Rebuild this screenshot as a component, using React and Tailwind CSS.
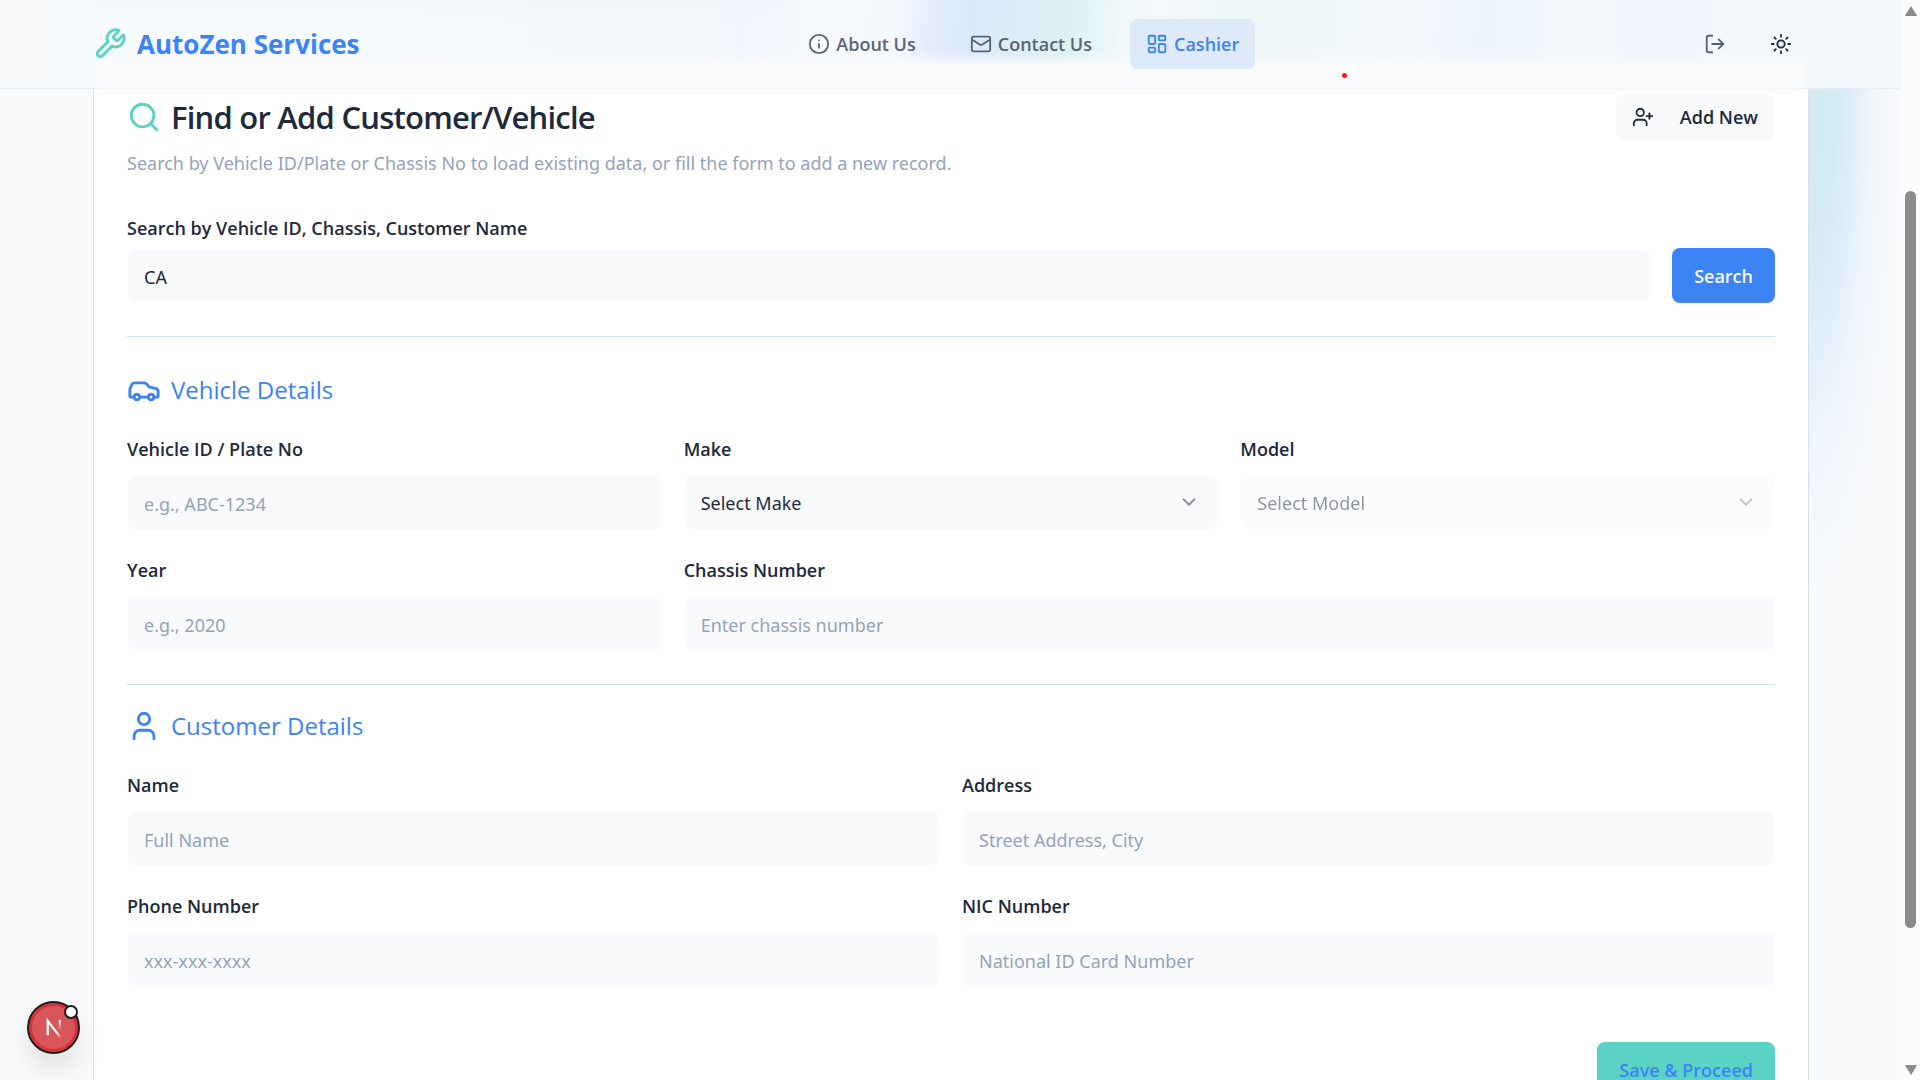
import { Search, Car, User, UserPlus, Info, Mail, LayoutDashboard, LogOut, Sun, ChevronDown } from "lucide-react";

const fieldBox =
  "h-[55px] w-full rounded-lg border border-white bg-[#f8fafc] bg-clip-padding px-4 pt-0.5 font-['Noto_Sans','Open_Sans',sans-serif] text-[18px] text-[#1e293b] placeholder:text-[#94a3b8]";

function Field({ id, label, placeholder, className = "" }) {
  return (
    <div className={`flex flex-col gap-[14px] ${className}`}>
      <label htmlFor={id} className="text-[18px] leading-6 font-semibold">{label}</label>
      <input id={id} type="text" placeholder={placeholder} className={fieldBox} />
    </div>
  );
}

function SelectField({ id, label, option, disabled = false }) {
  return (
    <div className="flex flex-col gap-[14px]">
      <label htmlFor={id} className="text-[18px] leading-6 font-semibold">{label}</label>
      <div className={`relative ${disabled ? "opacity-50" : ""}`}>
        <select id={id} disabled={disabled} className={`${fieldBox} appearance-none opacity-100`}>
          <option>{option}</option>
        </select>
        <ChevronDown size={22} className="pointer-events-none absolute top-4 right-[18px] text-[#1e293b] opacity-50" />
      </div>
    </div>
  );
}

function Wrench() {
  return (
    <svg viewBox="0 0 24 24" className="size-[34px] text-[#5bd3c4]" fill="none" stroke="currentColor" strokeWidth="2" strokeLinecap="round" strokeLinejoin="round" aria-hidden="true">
      <path d="M14.7 6.3a1 1 0 0 0 0 1.4l1.6 1.6a1 1 0 0 0 1.4 0l3.77-3.77a6 6 0 0 1-7.94 7.94l-6.91 6.91a2.12 2.12 0 0 1-3-3l6.91-6.91a6 6 0 0 1 7.94-7.94l-3.76 3.76z" />
    </svg>
  );
}

function Header() {
  return (
    <header className="absolute inset-x-0 top-0 z-10 h-[89px] border-b border-[#e5edf6] bg-[#fafbfd]">
      <div className="absolute inset-0 bg-[linear-gradient(93deg,#f8fafc_0%,#f7fafc_20%,#f3f8fc_32%,#f3f8fb_37%,#f1f5fd_39%,#f6fafd_43%,#f4f8fd_47%,#e3edfb_49%,#dde9fb_51%,#dbeff6_54%,#daf1f4_56%,#f0f8fb_59%,#f4f9fc_61%,#edf6f9_66%,#f3f8fc_74%,#edf3fd_78%,#f2f8fb_83%,#eff4fd_87%,#f2f8fb_92%,#f4f8fb_100%)]" />
      <div className="absolute top-0 left-[90px] h-3 w-[700px] bg-linear-to-b from-[#e9edf3] to-transparent opacity-50 blur-[5px]" />
      <div className="absolute inset-x-[100px] bottom-0 h-6 bg-[#fafbfd] shadow-[0_0_12px_4px_#fafbfd]" />
      <div className="relative mx-[93px] flex h-[88px] items-center justify-between">
        <a href="#home" className="flex items-center gap-[10px] text-[26px] font-bold text-[#3c83f6]">
          <Wrench />
          <span>AutoZen Services</span>
        </a>
        <nav className="flex items-center gap-[22px] text-[18px] font-semibold text-[#5b6472]">
          <a href="#about" className="flex h-[50px] items-center gap-[6px] px-4"><Info size={22} />About Us</a>
          <a href="#contact" className="flex h-[50px] items-center gap-[6px] px-4"><Mail size={22} />Contact Us</a>
          <a href="#cashier" className="flex h-[50px] items-center gap-[6px] rounded-lg bg-[#deeafa] px-4 text-[#3c83f6]"><LayoutDashboard size={22} />Cashier</a>
        </nav>
        <div className="flex items-center gap-3">
          <button type="button" aria-label="Log out" className="flex size-[54px] items-center justify-center text-[#5b6472]"><LogOut size={22} /></button>
          <button type="button" aria-label="Toggle theme" className="flex size-[54px] items-center justify-center text-[#1e293b]"><Sun size={22} /></button>
        </div>
      </div>
      <span className="absolute top-[73px] left-[1342px] size-[5px] rounded-full bg-[#ee1c1c]" />
    </header>
  );
}

function Scrollbar() {
  return (
    <div className="flex w-[19px] shrink-0 flex-col items-center bg-[#fcfcfc]" aria-hidden="true">
      <svg viewBox="0 0 14 12" className="mt-[5px] h-3 w-[14px]" fill="#8b8b8b"><path d="M7 1 13 10.5Q13 11 12 11H2Q1 11 1 10.5Z" /></svg>
      <div className="mt-[174px] h-[737px] w-[11px] rounded-full bg-[#8b8b8b]" />
      <div className="grow" />
      <svg viewBox="0 0 14 12" className="mb-1 h-3 w-[14px]" fill="#8b8b8b"><path d="M7 11 13 1.5Q13 1 12 1H2Q1 1 1 1.5Z" /></svg>
    </div>
  );
}

function DevBadge() {
  return (
    <button type="button" aria-label="Open developer tools" className="absolute bottom-[26px] left-[27px] z-20 flex size-[53px] items-center justify-center rounded-full border-2 border-[#1c1c1c] bg-[#d8565a] text-white shadow-[0_16px_32px_-4px_rgba(0,0,0,0.14)] ring-3 ring-[#d6323a] ring-inset">
      <svg viewBox="0 0 20 24" className="h-[22px] w-[18px]" fill="none" aria-hidden="true">
        <defs>
          <linearGradient id="diag" x1="2" y1="2" x2="18" y2="23" gradientUnits="userSpaceOnUse"><stop offset="0.7" stopColor="#fff" /><stop offset="1" stopColor="#fff" stopOpacity="0" /></linearGradient>
          <linearGradient id="stem" x1="0" y1="2" x2="0" y2="15" gradientUnits="userSpaceOnUse"><stop stopColor="#fff" /><stop offset="1" stopColor="#fff" stopOpacity="0" /></linearGradient>
        </defs>
        <path d="M3 20V4L17.500 23" stroke="url(#diag)" strokeWidth="2.500" />
        <path d="M16.500 3V15" stroke="url(#stem)" strokeWidth="2.500" />
      </svg>
      <span className="absolute top-0.5 right-0 size-[14px] rounded-full border-2 border-[#1c1c1c] bg-white" />
    </button>
  );
}

export default function App() {
  return (
    <div className="flex h-screen overflow-hidden bg-[#f8fafc] font-['Open_Sans','Noto_Sans',sans-serif] text-[#1e293b]">
      <div className="relative min-w-0 grow overflow-hidden">
        <div className="absolute top-0 right-0 h-[660px] w-[92px] bg-[radial-gradient(ellipse_92px_520px_at_0_80px,#d1ebf0_0%,#d3ebf3_28%,#e1effa_50%,#eff5fc_70%,#f8fafc_100%)]" />
        <Header />
        <main className="relative mr-[92px] ml-[93px] flex h-full flex-col border-x border-[#d5e0ec] bg-white px-[33px] pt-[93px]">
          <div className="flex items-center justify-between">
            <h1 className="flex items-center gap-[10px] text-[31px] leading-[48px] font-semibold tracking-tight"><Search size={34} className="text-[#5bd3c4]" />Find or Add Customer/Vehicle</h1>
            <button type="button" className="flex h-12 items-center gap-[26px] rounded-lg border border-white bg-[#f8fafc] bg-clip-padding px-4 text-[18px] font-semibold"><UserPlus size={22} />Add New</button>
          </div>
          <p className="mt-2 font-['Noto_Sans','Open_Sans',sans-serif] text-[18px] leading-7 text-[#94a3b8]">Search by Vehicle ID/Plate or Chassis No to load existing data, or fill the form to add a new record.</p>
          <form className="mt-[39px]">
            <div className="flex items-end gap-[22px]">
              <div className="flex grow flex-col gap-2">
                <label htmlFor="search" className="text-[18px] leading-6 font-semibold">Search by Vehicle ID, Chassis, Customer Name</label>
                <input id="search" type="text" defaultValue="CA" className={fieldBox} />
              </div>
              <button type="button" className="h-[55px] rounded-lg bg-[#3c83f6] px-[22px] pt-0.5 text-[18px] font-semibold text-[#f8fafc]">Search</button>
            </div>
            <hr className="mt-[33px] border-[#d0dff0]" />
            <h2 className="mt-[35px] flex items-center gap-[10px] text-[24px] leading-9 font-medium text-[#3c83f6]"><Car size={34} />Vehicle Details</h2>
            <div className="mt-[29px] grid grid-cols-3 gap-x-[22px] gap-y-7">
              <Field id="plate" label="Vehicle ID / Plate No" placeholder="e.g., ABC-1234" />
              <SelectField id="make" label="Make" option="Select Make" />
              <SelectField id="model" label="Model" option="Select Model" disabled />
              <Field id="year" label="Year" placeholder="e.g., 2020" />
              <Field id="chassis" label="Chassis Number" placeholder="Enter chassis number" className="col-span-2" />
            </div>
            <hr className="mt-[33px] border-[#d0dff0]" />
            <h2 className="mt-[23px] flex items-center gap-[10px] text-[24px] leading-9 font-medium text-[#3c83f6]"><User size={34} />Customer Details</h2>
            <div className="mt-[29px] grid grid-cols-2 gap-x-[22px] gap-y-7">
              <Field id="name" label="Name" placeholder="Full Name" />
              <Field id="address" label="Address" placeholder="Street Address, City" />
              <Field id="phone" label="Phone Number" placeholder="xxx-xxx-xxxx" />
              <Field id="nic" label="NIC Number" placeholder="National ID Card Number" />
            </div>
            <div className="mt-[55px] flex justify-end">
              <button type="submit" className="h-[55px] rounded-lg bg-[#5bd3c4] px-[22px] pt-0.5 text-[18px] font-semibold text-[#3c83f6]">Save &amp; Proceed</button>
            </div>
          </form>
        </main>
        <DevBadge />
      </div>
      <Scrollbar />
    </div>
  );
}
